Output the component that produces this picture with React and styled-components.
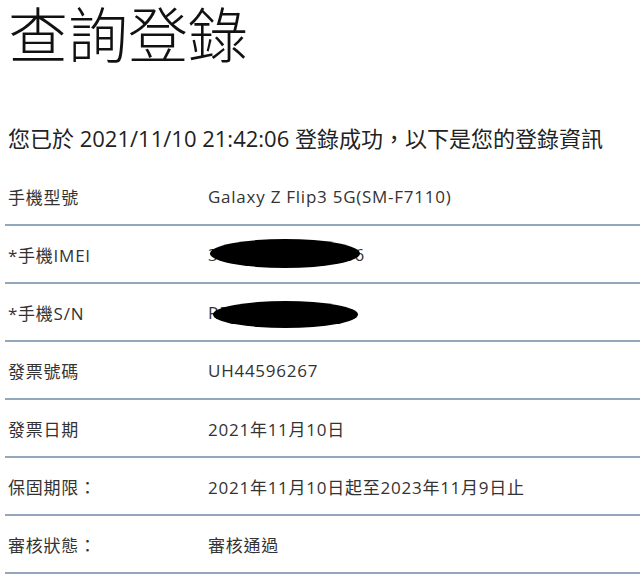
import styled, { createGlobalStyle } from "styled-components";

const GlobalStyle = createGlobalStyle`
  body {
    margin: 0;
    background: #fff;
    font-family: "Open Sans", "Noto Sans CJK TC", sans-serif;
  }
`;

const rows = [
  { label: "手機型號", value: "Galaxy Z Flip3 5G(SM-F7110)" },
  { label: "*手機IMEI", value: "350000000000006", mask: { left: 2, width: 150, height: 29, dy: -1 } },
  { label: "*手機S/N", value: "R5CR000000", mask: { left: 5, width: 145, height: 27, dy: 2 } },
  { label: "發票號碼", value: "UH44596267" },
  { label: "發票日期", value: "2021年11月10日" },
  { label: "保固期限：", value: "2021年11月10日起至2023年11月9日止" },
  { label: "審核狀態：", value: "審核通過" },
];

const App = () => {
  return (
    <>
      <GlobalStyle />
      <Page>
        <Title>查詢登錄</Title>
        <Notice>您已於 2021/11/10 21:42:06 登錄成功，以下是您的登錄資訊</Notice>
        <InfoList>
          {rows.map((row) => (
            <Row key={row.label}>
              <Label>{row.label}</Label>
              <Value>
                {row.value}
                {row.mask && (
                  <Mask
                    $left={row.mask.left}
                    $width={row.mask.width}
                    $height={row.mask.height}
                    $dy={row.mask.dy}
                  />
                )}
              </Value>
            </Row>
          ))}
        </InfoList>
      </Page>
    </>
  );
};

export default App;

const Page = styled.div`
  width: 640px;
  padding-left: 5px;
  box-sizing: border-box;
`;

const Title = styled.h1`
  margin: 0;
  padding: 0 0 0 3px;
  font-family: "Noto Sans CJK TC", sans-serif;
  font-size: 60px;
  font-weight: 300;
  line-height: 64px;
  color: #111;
`;

const Notice = styled.p`
  margin: 60px 0 0;
  padding-left: 3px;
  font-size: 22px;
  line-height: 28px;
  color: #222;
  white-space: nowrap;
`;

const InfoList = styled.div`
  margin-top: 16px;
  display: flex;
  flex-direction: column;
`;

const Row = styled.div`
  display: grid;
  grid-template-columns: 203px 1fr;
  align-items: center;
  height: 58px;
  box-sizing: border-box;
  border-bottom: 2px solid #93a8bc;
  font-size: 17px;
  letter-spacing: 0.75px;
  color: #333;
`;

const Label = styled.div`
  padding-left: 3px;
`;

const Value = styled.div`
  position: relative;
  white-space: nowrap;
`;

const Mask = styled.span`
  position: absolute;
  left: ${(p) => p.$left}px;
  top: 50%;
  width: ${(p) => p.$width}px;
  height: ${(p) => p.$height}px;
  margin-top: ${(p) => p.$dy - p.$height / 2}px;
  border-radius: 50%;
  background: #000;
`;
